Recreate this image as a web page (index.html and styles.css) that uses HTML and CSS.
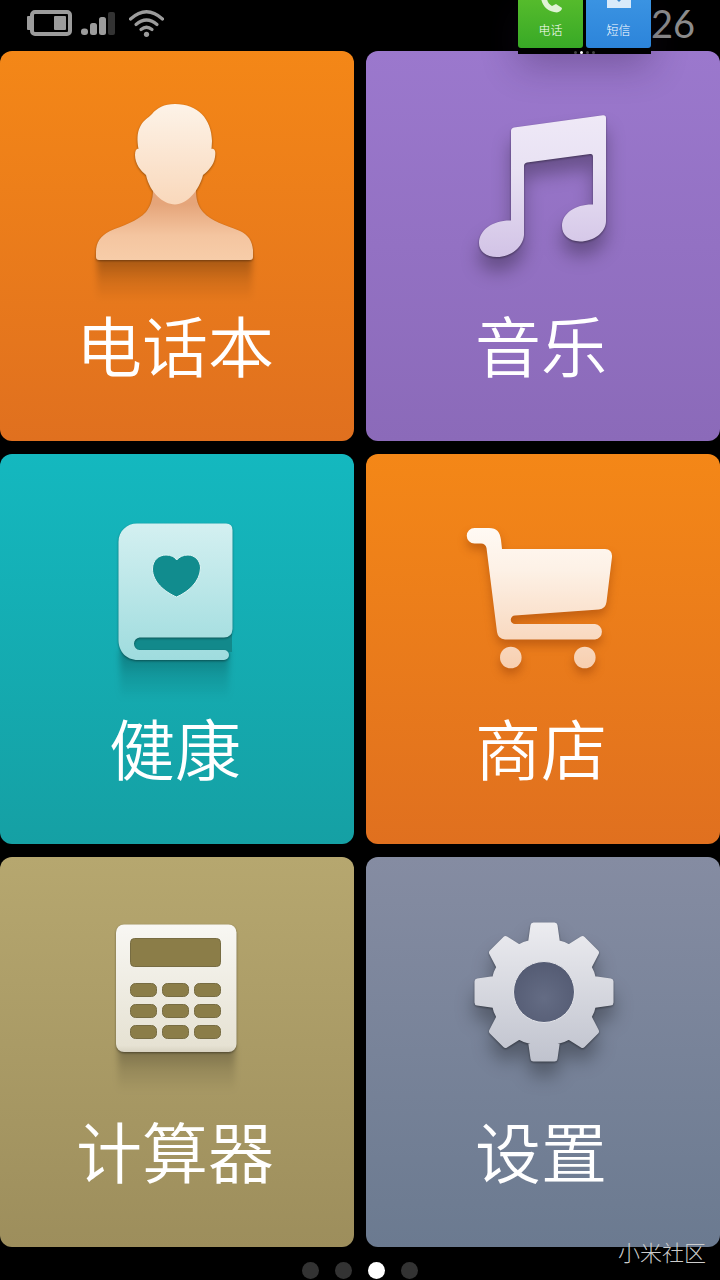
FILE: index.html
```
<!DOCTYPE html>
<html lang="zh-CN">
<head>
    <meta charset="UTF-8">
    <meta name="viewport" content="width=device-width, initial-scale=1.0">
    <title>桌面</title>
    <link rel="stylesheet" href="styles.css">
</head>
<body>
    <header class="status-bar">
        <div class="status-icons">
            <svg width="45" height="28" viewBox="27 9 45 28">
                <rect x="27" y="16" width="5" height="14" rx="1" fill="#9c9c9c"/>
                <rect x="32" y="12" width="38" height="22" rx="3" fill="none" stroke="#9c9c9c" stroke-width="4"/>
                <rect x="54" y="16" width="12" height="14" rx="1" fill="#9c9c9c"/>
            </svg>
            <svg width="39" height="28" viewBox="81 9 39 28">
                <rect x="81" y="28.500" width="7" height="6.500" rx="3" fill="#9c9c9c"/>
                <rect x="90" y="23" width="7" height="12" rx="2.500" fill="#9c9c9c"/>
                <rect x="99" y="17" width="7" height="18" rx="2.500" fill="#9c9c9c"/>
                <rect x="108" y="12" width="7" height="23" rx="2" fill="#333"/>
            </svg>
            <svg width="35" height="28" viewBox="129 9 35 28" fill="none" stroke="#9c9c9c" stroke-width="3.200" stroke-linecap="round">
                <path d="M130.500 19 Q146.500 4.500 162.500 19"/>
                <path d="M136 24.500 Q146.500 15.500 157 24.500"/>
                <path d="M141 29.500 Q146.500 25 152 29.500"/>
                <circle cx="146.500" cy="34.300" r="2.600" fill="#9c9c9c" stroke="none"/>
            </svg>
        </div>
        <div class="clock">:26</div>
    </header>

    <div class="preview">
        <div class="preview-tiles">
            <div class="preview-tile green">
                <svg width="40" height="16" viewBox="530 0 40 16">
                    <path d="M540 -2 C541 6 547 12 556 12.500 C559 12 561 10 561 8 L555 4 L551 6 C548 4 546 2 546 -2Z" fill="#dff3d6"/>
                </svg>
                <span>电话</span>
            </div>
            <div class="preview-tile blue">
                <svg width="40" height="16" viewBox="598 0 40 16">
                    <rect x="606" y="-4" width="24" height="12" fill="#d8eafa"/>
                    <path d="M615 -1 L618 2 L621 -1Z" fill="#3a87cc"/>
                </svg>
                <span>短信</span>
            </div>
        </div>
        <div class="preview-dots"><i></i><i class="on"></i><i></i><i></i></div>
    </div>

    <main class="tiles">
        <a class="tile orange" href="#contacts">
            <svg class="icon" viewBox="77 91 200 220">
                <defs>
                    <linearGradient id="head" x1="0" y1="0" x2="0" y2="1">
                        <stop offset="0" stop-color="#fdf3e8"/>
                        <stop offset="1" stop-color="#f9d8bb"/>
                    </linearGradient>
                    <linearGradient id="body" x1="0" y1="0" x2="0" y2="1">
                        <stop offset="0.200" stop-color="#e5a57a"/>
                        <stop offset="0.650" stop-color="#f4c5a0"/>
                        <stop offset="1" stop-color="#f7cda9"/>
                    </linearGradient>
                    <linearGradient id="fade" x1="0" y1="0" x2="0" y2="1">
                        <stop offset="0" stop-color="#000" stop-opacity="0.300"/>
                        <stop offset="0.500" stop-color="#000" stop-opacity="0.110"/>
                        <stop offset="1" stop-color="#000" stop-opacity="0"/>
                    </linearGradient>
                    <filter id="soft" x="-10%" y="-20%" width="120%" height="140%">
                        <feGaussianBlur stdDeviation="3"/>
                    </filter>
                </defs>
                <rect x="97" y="257" width="155" height="44" fill="url(#fade)" filter="url(#soft)"/>
                <g class="edge">
                    <path fill="url(#body)" d="M153 190 C153 200 150 207 146 212 C138 221 122 226 110 231 C100 236 96 243 96 252 V257 Q96 260 99 260 H250 Q253 260 253 257 V250 C252 240 248 235 240 231 C225 225 211 221 203 212 C198 206 196 200 196 190Z"/>
                    <path fill="url(#head)" d="M175 104 C198 104 211.500 119 212 141 L211.500 149 C215 148 216 152 215 157 C214 165 208 171 203 175 C199 191 187 204 175 204.500 C163 204 150 193 146 175 C141 171 135 164 135 155 C135 150 137 148 138.500 149 C137 140 137 133 140 127 C142.500 121 148 118 152 114 C157 108 164 104 175 104Z"/>
                </g>
            </svg>
            <span class="label">电话本</span>
        </a>

        <a class="tile purple" href="#music">
            <svg class="icon" viewBox="443 91 200 220">
                <defs>
                    <linearGradient id="note" x1="0" y1="0" x2="0" y2="1">
                        <stop offset="0" stop-color="#efe9f7"/>
                        <stop offset="0.400" stop-color="#e8e1f3"/>
                        <stop offset="1" stop-color="#d2c3e6"/>
                    </linearGradient>
                </defs>
                <g class="drop"><g class="edge">
                    <path fill="url(#note)" d="M514 127.500 L603 115.200 Q606 115 606 118 V221 C606 232 594 241.500 580 241.500 C569 241 562 235 562 226 C562 213 576 204 593 204.500 V157 Q593 153.500 590 154 L527 162.500 Q524 163 524 166 V235 C523 247 511 257 497 257 C486 257 479 251 479 243 C479 230 493 220 511 220.500 V131 Q511 128 514 127.500Z"/>
                </g></g>
            </svg>
            <span class="label">音乐</span>
        </a>

        <a class="tile teal" href="#health">
            <svg class="icon" viewBox="77 494 200 220">
                <defs>
                    <linearGradient id="book" x1="0" y1="0" x2="0" y2="1">
                        <stop offset="0" stop-color="#d4f0f1"/>
                        <stop offset="1" stop-color="#9fdcde"/>
                    </linearGradient>
                </defs>
                <rect x="120" y="650" width="109" height="50" fill="url(#fade)" filter="url(#soft)"/>
                <rect x="130" y="634" width="102" height="18" fill="#12898b"/>
                <g class="edge">
                    <path fill="url(#book)" d="M137 523.500 H226 Q232.500 523.500 232.500 530 V629 Q232 637.500 224 637.500 H139.500 A6.300 6.300 0 0 0 139.500 650 H224 A5 5 0 0 1 224 660 H138 C126 660 118.500 651 118.500 640 V542 C118.500 531 127 523.500 137 523.500Z"/>
                </g>
                <path fill="#118c8e" stroke="#dff5f5" stroke-width="1" d="M176.500 597 C165 592 152.500 582 152.500 569 C152.500 560 159 555 166 555 C171 555 175 557 176.700 560 C179 557 183 555 188 555 C195 555 200.500 561 200.500 568 C200 582 188 592 176.500 597Z"/>
            </svg>
            <span class="label">健康</span>
        </a>

        <a class="tile orange" href="#store">
            <svg class="icon" viewBox="443 494 200 220">
                <defs>
                    <linearGradient id="cart" gradientUnits="userSpaceOnUse" x1="0" y1="528" x2="0" y2="668">
                        <stop offset="0" stop-color="#fffaf4"/>
                        <stop offset="0.300" stop-color="#fdf1e6"/>
                        <stop offset="1" stop-color="#f7cfb0"/>
                    </linearGradient>
                </defs>
                <g class="cast" fill="url(#cart)">
                    <path d="M474.500 528 H489 C497 528 500 532 501 540 L502 549 H605 Q612.500 549.500 612 557 L606.500 602 Q605.500 609 599 609.500 L515 615.500 A4.200 4.200 0 0 0 515 624 H595 A7.800 7.800 0 0 1 595 639.500 H505 Q498 639 497 632 L486.500 548 Q485.500 543.500 481 543.500 H474.500 A7.700 7.700 0 0 1 474.500 528Z"/>
                    <circle cx="510.800" cy="657.500" r="10.800"/>
                    <circle cx="584.800" cy="657.500" r="10.800"/>
                </g>
            </svg>
            <span class="label">商店</span>
        </a>

        <a class="tile khaki" href="#calculator">
            <svg class="icon" viewBox="77 897 200 220">
                <defs>
                    <linearGradient id="calc" x1="0" y1="0" x2="0" y2="1">
                        <stop offset="0" stop-color="#f8f7f3"/>
                        <stop offset="0.950" stop-color="#e6e2d3"/>
                        <stop offset="1" stop-color="#d8d3c2"/>
                    </linearGradient>
                </defs>
                <rect x="118" y="1046" width="117" height="46" fill="url(#fade)" filter="url(#soft)"/>
                <g class="edge">
                    <rect x="116" y="924.500" width="120.500" height="127.500" rx="8" fill="url(#calc)"/>
                </g>
                <g fill="#8b7d48" stroke="#776c42" stroke-width="1">
                    <rect x="130.500" y="938.500" width="90" height="28" rx="4"/>
                    <rect x="130.500" y="983.500" width="26" height="13" rx="5"/>
                    <rect x="162.500" y="983.500" width="26" height="13" rx="5"/>
                    <rect x="194.500" y="983.500" width="26" height="13" rx="5"/>
                    <rect x="130.500" y="1004.500" width="26" height="13" rx="5"/>
                    <rect x="162.500" y="1004.500" width="26" height="13" rx="5"/>
                    <rect x="194.500" y="1004.500" width="26" height="13" rx="5"/>
                    <rect x="130.500" y="1025.500" width="26" height="13" rx="5"/>
                    <rect x="162.500" y="1025.500" width="26" height="13" rx="5"/>
                    <rect x="194.500" y="1025.500" width="26" height="13" rx="5"/>
                </g>
            </svg>
            <span class="label">计算器</span>
        </a>

        <a class="tile slate" href="#settings">
            <svg class="icon" viewBox="443 897 200 220">
                <defs>
                    <linearGradient id="gear" gradientUnits="userSpaceOnUse" x1="0" y1="-69" x2="0" y2="69">
                        <stop offset="0" stop-color="#ececf0"/>
                        <stop offset="1" stop-color="#c0c3ce"/>
                    </linearGradient>
                    <radialGradient id="hole" cx="0.500" cy="0.600" r="0.600">
                        <stop offset="0" stop-color="#646c84"/>
                        <stop offset="1" stop-color="#545b73"/>
                    </radialGradient>
                </defs>
                <g class="drop"><g class="edge">
                    <g transform="translate(544 992)">
                        <path fill="url(#gear)" stroke="url(#gear)" stroke-width="6" stroke-linejoin="round" d="M-10.500 -66.500 H10.500 L13 -49 Q20 -47.500 25 -44.500 L38.500 -53 L52 -39.500 L44.500 -25 Q48 -19 49 -13 L66.500 -10.500 V10.500 L49 13 Q48 19 44.500 25 L52 39.500 L38.500 53 L25 44.500 Q20 47.500 13 49 L10.500 66.500 H-10.500 L-13 49 Q-20 47.500 -25 44.500 L-38.500 53 L-52 39.500 L-44.500 25 Q-48 19 -49 13 L-66.500 10.500 V-10.500 L-49 -13 Q-48 -19 -44.500 -25 L-52 -39.500 L-38.500 -53 L-25 -44.500 Q-20 -47.500 -13 -49Z"/>
                        <circle r="30.500" fill="url(#hole)" stroke="#e4e5ea" stroke-width="1"/>
                    </g>
                </g></g>
            </svg>
            <span class="label">设置</span>
        </a>
    </main>

    <footer class="pager">
        <i></i><i></i><i class="on"></i><i></i>
        <span class="watermark">小米社区</span>
    </footer>
</body>
</html>
```
FILE: styles.css
```
body {
    margin: 0;
    background-color: #000;
    color: #fff;
    font-family: "Noto Sans CJK SC", sans-serif;
    position: relative;
}

/* status bar */
.status-bar {
    display: flex;
    justify-content: space-between;
    align-items: center;
    height: 46px;
    padding: 0 25px 5px 27px;
}

.status-icons {
    display: flex;
    gap: 9px;
}

.clock {
    font-family: Lato, sans-serif;
    font-size: 38px;
    line-height: 46px;
    color: #8c8c8c;
}

/* small launcher preview hanging over the status bar */
.preview {
    position: absolute;
    top: 0;
    right: 69px;
    width: 133px;
    height: 54px;
    background-color: #000;
    box-shadow: 0 12px 36px rgba(40, 20, 60, 0.3);
}

.preview-tiles {
    display: grid;
    grid-template-columns: 1fr 1fr;
    gap: 3px;
}

.preview-tile {
    display: flex;
    flex-direction: column;
    align-items: center;
    height: 48px;
    border-radius: 0 0 3px 3px;
    font-size: 12px;
    line-height: 28px;
    font-weight: 300;
}

.preview-tile.green {
    background: linear-gradient(#55bb2c, #38a926);
}

.preview-tile.blue {
    background: linear-gradient(#3a93e2, #2c84da);
}

.preview-dots {
    display: flex;
    justify-content: center;
    gap: 3px;
    padding-top: 3px;
}

.preview-dots i {
    width: 3px;
    height: 3px;
    border-radius: 50%;
    background-color: #444;
}

.preview-dots .on {
    background-color: #fff;
}

/* tiles */
.tiles {
    display: grid;
    grid-template-columns: 1fr 1fr;
    gap: 13px 12px;
}

.tile {
    display: flex;
    flex-direction: column;
    align-items: center;
    padding: 40px 0 66px;
    border-radius: 12px;
    color: #fff;
    text-decoration: none;
}

.icon {
    width: 200px;
    height: 220px;
}

.label {
    padding-right: 4px;
    font-size: 66px;
    line-height: 64px;
    font-weight: 350;
}

.orange {
    background: linear-gradient(#f48717, #e0701f);
}

.purple {
    background: linear-gradient(#9b78cd, #8b6ab9);
}

.teal {
    background: linear-gradient(#14b8bf, #15a0a4);
}

.khaki {
    background: linear-gradient(#b6a76f, #9d8e5c);
}

.slate {
    background: linear-gradient(#858ca2, #6b7a90);
}

.edge {
    filter: drop-shadow(0 1px 1px rgba(0, 0, 0, 0.4));
}

.drop {
    filter: drop-shadow(0 14px 9px rgba(0, 0, 0, 0.3));
}

.cast {
    filter: drop-shadow(0 6px 5px rgba(120, 40, 0, 0.35));
}

/* page dots */
.pager {
    display: flex;
    justify-content: center;
    gap: 16px;
    padding-top: 15px;
    position: relative;
}

.pager i {
    width: 17px;
    height: 17px;
    border-radius: 50%;
    background-color: #333;
}

.pager .on {
    background-color: #fff;
}

.watermark {
    position: absolute;
    right: 14px;
    bottom: 12px;
    font-size: 22px;
    line-height: 32px;
    font-weight: 300;
    color: #ccc;
}
```
